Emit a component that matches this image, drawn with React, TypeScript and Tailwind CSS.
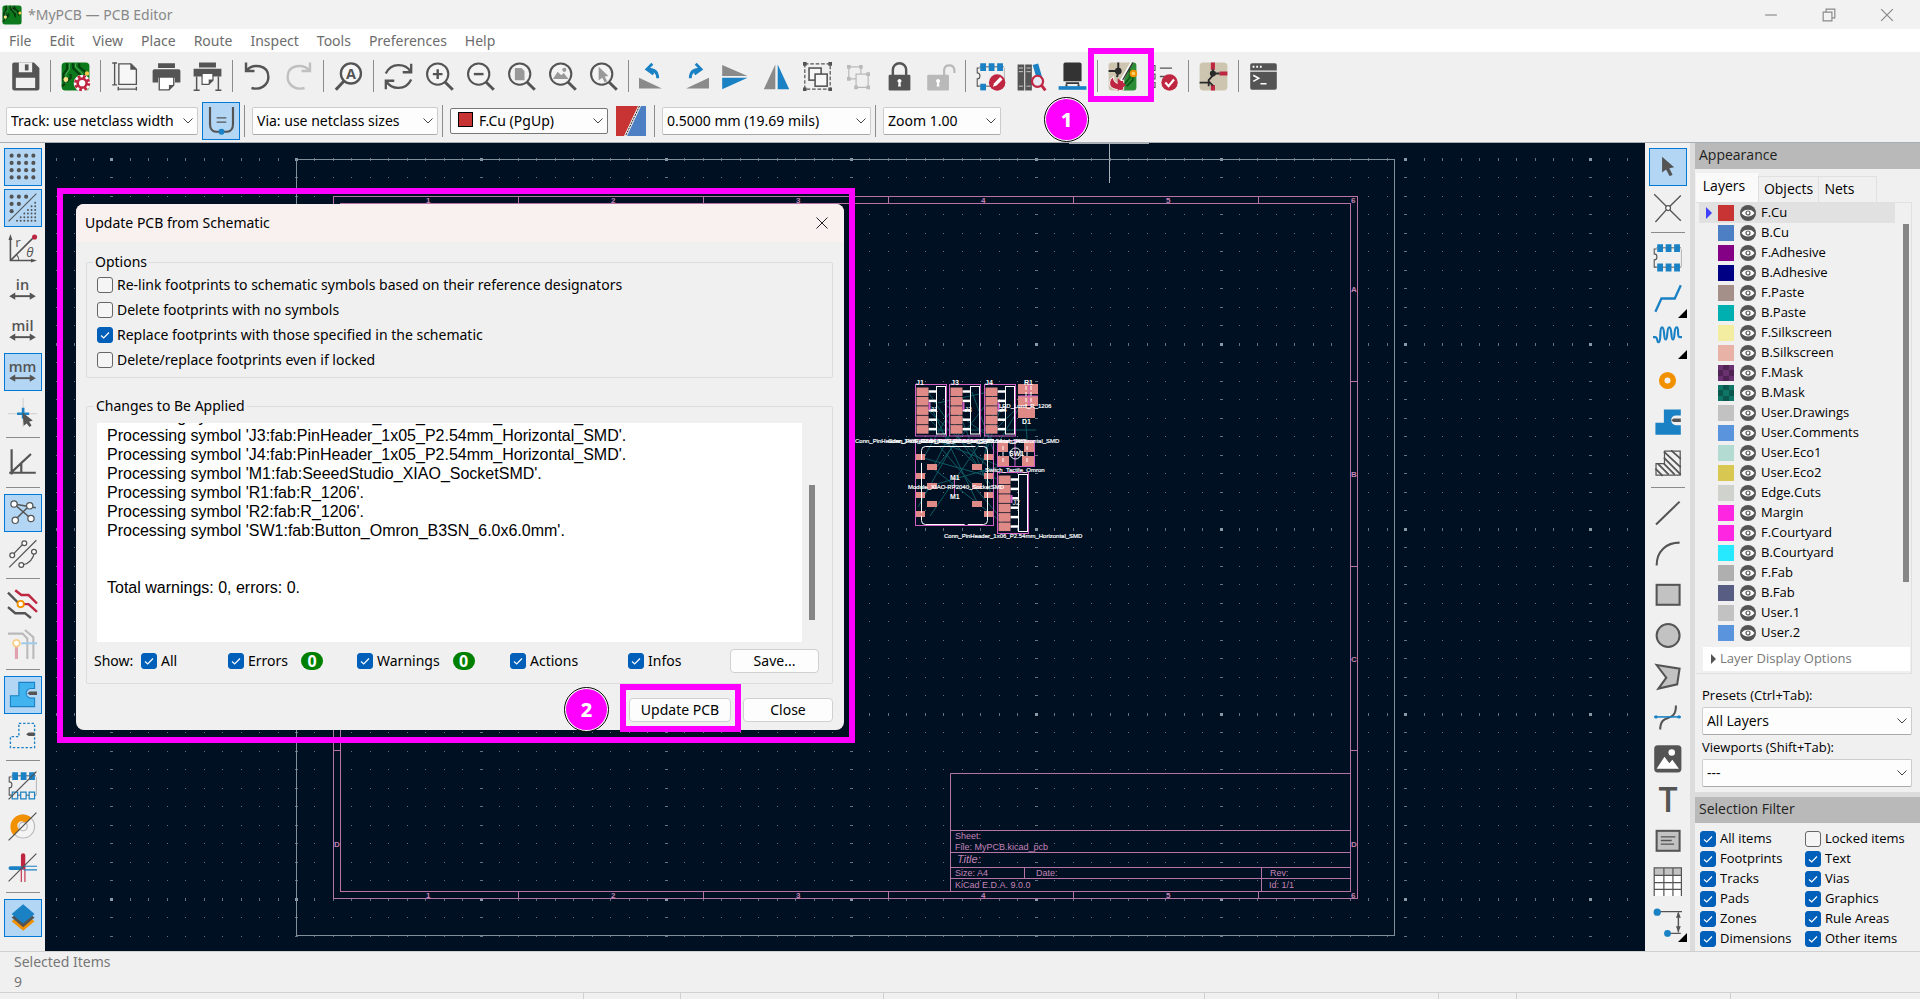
import React, { useState } from "react";

const D = "#545454";
const B = "#1a81c4";
const R = "#bf2641";
const G = "#b9b9b9";

const Icon = ({ children }: { children: React.ReactNode }) => (
  <svg viewBox="0 0 24 24" className="size-[29px] shrink-0 overflow-visible" fill="none" aria-hidden="true">
    {children}
  </svg>
);

const Lens = () => (
  <>
    <circle cx="10.500" cy="10" r="8.800" stroke={D} strokeWidth="1.700" fill="#f4f4f4" />
    <path d="M16.500 16.500l6.500 6.500" stroke={D} strokeWidth="2.400" />
  </>
);

const Board = () => (
  <>
    <rect x="0.5" y="0.5" width="23" height="23" rx="3" fill="#0c7a1c" />
    <path d="M5 1v5l-3 4v6M10 1v4l6 6v4M15 1v3l5 4v5M1 20l7-7v-3" stroke="#06420f" strokeWidth="1.8" />
    <path d="M7 1v5l-3 4v8M12 1v3l6 6" stroke="#4aa84f" strokeWidth="0.9" />
    <circle cx="21.5" cy="9.500" r="1.8" fill="#f5c84a" />
    <circle cx="4" cy="14.5" r="2" fill="#ffe08a" />
  </>
);

const Chip = () => (
  <>
    <path d="M3 5H1v4c3 0 3 5 0 5v6h2" stroke={D} strokeWidth="0.9" />
    <path d="M23.500 5v15" stroke="#aaa" strokeWidth="0.7" />
    <path d="M3 4h20M3 20h20" stroke={D} strokeWidth="0.8" />
    <path d="M3.500 1h4.800v6.500H3.500zM10.500 1h4.800v6.500h-4.800zM17.500 1h4.800v6.500h-4.800z" fill={B} />
  </>
);

const Arrows = ({ text }: { text: string }) => (
  <>
    <text x="12" y="12" textAnchor="middle" fontSize="12" fontFamily="Open Sans, sans-serif" fontWeight="600" fill={D}>{text}</text>
    <path d="M4 17.500h16" stroke={D} strokeWidth="1.6" />
    <path d="M1 17.500l5-3v6zM23 17.500l-5-3v6z" fill={D} />
  </>
);

const Schem = () => (
  <>
    <rect x="0.5" y="0.500" width="23" height="23" rx="3" fill="#cdc5b0" />
    <path d="M11.500 0.500v6M17 9.500h6.500M11.500 19v4.500" stroke={R} strokeWidth="3.400" />
    <path d="M11.500 6v5l-3.500 4v5M0.500 17h8M8 16l3.500 3.500M12 9.500h5" stroke="#2a2a2a" strokeWidth="1.500" />
    <circle cx="11.500" cy="9.500" r="2.500" fill="#2a2a2a" />
  </>
);

const icons: Record<string, React.ReactNode> = {
  save: (
    <>
      <path d="M1 2a1.500 1.500 0 0 1 1.500-1.500H19L23.500 5v17a1.500 1.500 0 0 1-1.500 1.500H2.500A1.500 1.500 0 0 1 1 22z" fill={D} />
      <path d="M6.500 0.500h11v8h-11zM4 13h16v8.500H4z" fill="#efefef" />
      <path d="M11.500 2h3v5h-3z" fill={D} />
    </>
  ),
  board: (
    <>
      <Board />
      <circle cx="17.500" cy="17.500" r="4" stroke="#fff" strokeWidth="6" />
      <circle cx="17.500" cy="17.500" r="5.400" stroke={R} strokeWidth="2.600" strokeDasharray="2.200 2.040" />
      <circle cx="17.500" cy="17.500" r="3.700" stroke={R} strokeWidth="2.200" fill="#fff" />
    </>
  ),
  page: (
    <>
      <path d="M6.500 1.500h10l4.500 4.500v12.500H6.500z" stroke={D} strokeWidth="1.100" fill="#f7f7f7" />
      <path d="M16 1v5.500h5.500z" fill={D} />
      <path d="M1 0.800h4M3 1v18M1 19h4M6 20.500v3M21 20.500v3M6 22.500h15" stroke={D} strokeWidth="1.100" />
    </>
  ),
  print: (
    <>
      <path d="M5 1h14v4H5zM2 6h20a1.500 1.500 0 0 1 1.500 1.500V17H19v-4H5v4H0.500V7.500A1.500 1.500 0 0 1 2 6z" fill={D} />
      <path d="M6 12.500h12V19l-4 4H6z" fill="#fff" stroke={D} strokeWidth="1.100" />
      <path d="M14 23.500V19h4.500z" fill={D} />
    </>
  ),
  plot: (
    <>
      <path d="M5 0.500h14v4H5zM0.500 5.500h23v6.500H0.500z" fill={D} />
      <path d="M3 12v11M21 12v11M0.500 23.300h5M18.500 23.300h5" stroke={D} strokeWidth="1.200" />
      <path d="M7.500 9.500h9v5.500l-3.500 3.500H7.500z" fill="#fff" stroke={D} />
      <path d="M13 19v-4.500h4z" fill={D} />
    </>
  ),
  undo: <path d="M2.500 0.500v7h7M3 7C8 1 21 2 21 12.500c0 7-7 11-14 9" stroke={D} strokeWidth="2" />,
  redo: <path d="M21.500 0.500v7h-7M21 7C16 1 3 2 3 12.500c0 7 7 11 14 9" stroke="#c0c0c0" strokeWidth="2" />,
  find: (
    <>
      <circle cx="14" cy="9.500" r="8.300" stroke={D} strokeWidth="1.900" fill="#f7f7f7" />
      <path d="M8.500 15.500L1.500 23" stroke={D} strokeWidth="2.500" />
      <text x="14" y="14" textAnchor="middle" fontSize="12" fontWeight="700" fontFamily="Open Sans, sans-serif" fill={D}>A</text>
    </>
  ),
  refresh: <path d="M22.500 1.500v7h-7M22 8C18 1 6 0 1.500 9.500M1.500 22.500v-7h7M2 16c4 7 16 8 20.500-1.500" stroke={D} strokeWidth="1.900" />,
  zoomIn: <><Lens /><path d="M6.500 10h8M10.500 6v8" stroke={D} strokeWidth="2" /></>,
  zoomOut: <><Lens /><path d="M6.500 10h8" stroke={D} strokeWidth="2" /></>,
  zoomFit: <><Lens /><path d="M6.500 5H12l2.500 2.500V15h-8z" fill="#999" /></>,
  zoomObj: <><Lens /><path d="M4 14l4-6 3 3 2-2 4 5z" fill="#999" /><circle cx="13.500" cy="6.500" r="1.700" fill="#999" /></>,
  zoomSel: <><Lens /><path d="M8 4v11l3-2 2 4 2-1-2-4 3-.500z" fill="#999" /></>,
  ccw: <><path d="M0 22v-9l19 9z" fill="#8a8a8a" /><path d="M15.500 13.500c0-5-3-7.500-8-7.500M11 1.500L6.500 6l5.500 4" stroke={B} strokeWidth="2.300" /></>,
  cw: <><path d="M24 22v-9L5 22z" fill="#8a8a8a" /><path d="M8.500 13.500c0-5 3-7.500 8-7.500M13 1.500L17.500 6 12 10" stroke={B} strokeWidth="2.300" /></>,
  flipV: <><path d="M1 2.500v9h21z" fill="#8a8a8a" /><path d="M1 22.500v-9.500h21z" fill={B} /></>,
  flipH: <><path d="M1.500 22.500h9.500V2z" fill="#8a8a8a" /><path d="M22.500 22.500H13V2z" fill={B} /></>,
  group: (
    <>
      <rect x="1.500" y="1.500" width="21" height="21" stroke={D} strokeDasharray="3 1.500" />
      <path d="M0 0h3v3H0zM21 0h3v3h-3zM0 21h3v3H0zM21 21h3v3h-3z" fill={D} />
      <rect x="5" y="5" width="10" height="10" fill="#f7f7f7" stroke={D} strokeWidth="1.300" />
      <rect x="10" y="10" width="10" height="10" fill="#f7f7f7" stroke={D} strokeWidth="1.300" />
    </>
  ),
  ungroup: (
    <>
      <path d="M4 4h10v10H4z" stroke={G} />
      <path d="M10 10h10v11H10z" fill="#f0f0f0" stroke={G} />
      <path d="M2.500 2.500h3v3h-3zM12.500 2.500h3v3h-3zM2.500 12.500h3v3h-3zM18.500 8.500h3v3h-3zM8.500 19.500h3v3h-3zM18.500 19.500h3v3h-3z" fill={G} />
    </>
  ),
  lock: (
    <>
      <path d="M6.500 11V6.500a5.500 5.500 0 0 1 11 0V11" stroke={D} strokeWidth="2" />
      <rect x="3" y="10.500" width="18" height="13" rx="1" fill={D} />
      <path d="M12 14a1.700 1.700 0 0 1 .8 3.200l.4 3h-2.400l.4-3A1.700 1.700 0 0 1 12 14z" fill="#fff" />
    </>
  ),
  unlock: (
    <>
      <path d="M15 11V6.500a4.300 4.300 0 0 1 8.500 0V9" stroke={G} strokeWidth="1.800" />
      <rect x="1" y="10.500" width="18" height="13" rx="1" fill={G} />
      <path d="M10 14a1.700 1.700 0 0 1 .8 3.200l.4 3H8.800l.4-3A1.700 1.700 0 0 1 10 14z" fill="#fff" />
    </>
  ),
  fpEdit: (
    <>
      <Chip />
      <path d="M3.500 18h4.800v5.500H3.500z" fill={B} />
      <circle cx="17.500" cy="17" r="6.800" fill={R} />
      <path d="M14 20.500l1-3 5-5 2 2-5 5z" fill="#fff" />
    </>
  ),
  library: (
    <>
      <path d="M0.500 2h5.500v21.500H0.500zM6.800 2h5.500v21.500H6.800z" fill={D} />
      <path d="M1.500 5h3.500M1.500 8h3.500M7.800 5h3.500M7.800 8h3.500M1.500 20h3.500M7.800 20h3.500" stroke="#ccc" strokeWidth="0.800" />
      <path d="M13 2.500l4.500-1.300 3.500 12-4.500 1.300z" fill={B} />
      <circle cx="17" cy="16" r="4.600" fill="#e9e9f2" stroke={R} strokeWidth="1.800" />
      <path d="M20 19l3.500 4.500" stroke={R} strokeWidth="2.400" />
    </>
  ),
  viewer: (
    <>
      <path d="M6 0.500h12a1.500 1.500 0 0 1 1.500 1.500v14h-15V2A1.500 1.500 0 0 1 6 0.500z" fill="#333" />
      <path d="M6.500 17.500h11M7 18.500v2M17 18.500v2" stroke="#333" strokeWidth="1.600" />
      <path d="M0.500 20h23v3H0.500z" fill={B} />
    </>
  ),
  update: (
    <>
      <path d="M3 0.500h17L8 23.500H3A2.500 2.500 0 0 1 .5 21V3A2.500 2.500 0 0 1 3 .5z" fill="#cdc5b0" />
      <path d="M20 .5h1A2.500 2.500 0 0 1 23.500 3v18a2.500 2.500 0 0 1-2.500 2.500H9z" fill="#2e8b36" />
      <path d="M18 6v7l-5 6M20.500 12v3l-5 5" stroke="#0b5a17" strokeWidth="1.500" />
      <path d="M8.500 0.500v7l-1 5M0.500 7.500h8" stroke="#2a2a2a" strokeWidth="1.600" />
      <circle cx="8.500" cy="7.500" r="2.800" fill="#2a2a2a" />
      <path d="M19.500 0.500L10 17" stroke="#fff" strokeWidth="2" />
      <path d="M20.500 0.500L11 17" stroke="#333" strokeWidth="1.100" />
      <circle cx="21" cy="9.500" r="2.300" fill="#ffd56b" stroke="#f29100" strokeWidth="1.600" />
      <path d="M4.500 12c-4 3-4.500 8 0 10 2 .8 4 .9 5 .8l-.5 1.200 4-1v-8l-3 .500-.5 2.500c-4-.500-5-2.500-5-6z" fill={R} stroke="#fff" strokeWidth="0.800" />
      <path d="M8 13.500l7 5.500-7 5z" fill={R} />
    </>
  ),
  drc: (
    <>
      <path d="M2 3h3v4H2zM2 10h3v4H2zM2 17h3v4H2z" stroke={D} strokeWidth="0.900" />
      <path d="M9 5h10M9 12h5" stroke={D} strokeWidth="1.100" />
      <circle cx="17" cy="17" r="6.800" fill={R} />
      <path d="M13.500 17l2.700 3 4.500-5.500" stroke="#fff" strokeWidth="1.800" />
    </>
  ),
  schem: <Schem />,
  script: (
    <>
      <path d="M2.500 1h19A1.500 1.500 0 0 1 23 2.500V7H1V2.500A1.500 1.500 0 0 1 2.500 1zM1 8h22v13.500a1.500 1.500 0 0 1-1.500 1.500h-19A1.500 1.500 0 0 1 1 21.500z" fill={D} />
      <path d="M3 4h1.500M6 4h1.500M9 4h1.500" stroke="#fff" strokeWidth="1.600" />
      <path d="M3.500 11l4.500 2.500-4.500 2.500M9.500 18h5" stroke="#fff" strokeWidth="1.300" />
    </>
  ),
  grid: (
    <g fill={D}>
      {[3, 9, 15, 21].map((y) => [3, 9, 15, 21].map((x) => <circle key={x + "-" + y} cx={x} cy={y} r="1.700" />))}
    </g>
  ),
  gridOver: (
    <>
      <g fill={D}>
        {[[3, 3], [9, 3], [15, 3], [3, 9], [9, 9], [3, 15]].map(([x, y]) => <circle key={x + "-" + y} cx={x} cy={y} r="1.700" />)}
        {[0, 1, 2, 3, 4, 5].map((r) => Array.from({ length: r + 1 }, (_, c) => <circle key={r + "." + c} cx={22.500 - c * 3} cy={8 + r * 3} r="0.800" />))}
      </g>
      <path d="M0.500 23.500l23-23" stroke={D} strokeWidth="0.900" />
    </>
  ),
  polar: (
    <>
      <path d="M2 3v19h19M2 22L21 3" stroke={D} strokeWidth="1.300" />
      <path d="M2 0l-1.600 5h3.200zM24 22l-5-1.600v3.200z" fill={D} />
      <path d="M9 22a7 7 0 0 0-2-5" stroke={D} strokeWidth="0.900" />
      <circle cx="22" cy="2.500" r="2.100" fill={R} />
      <text x="6" y="11" fontSize="11" fill={D} fontFamily="Open Sans, sans-serif">r</text>
      <text x="15" y="19" fontSize="11" fontStyle="italic" fill={D} fontFamily="Open Sans, sans-serif">θ</text>
    </>
  ),
  inch: <Arrows text="in" />,
  mil: <Arrows text="mil" />,
  mm: <Arrows text="mm" />,
  cursor: (
    <>
      <path d="M12.500 0v24M0 13h24" stroke="#c2c2c2" strokeWidth="0.600" />
      <path d="M12.500 8v9M7.500 13h10" stroke={B} strokeWidth="2.200" />
      <path d="M12 12l1 11 2.500-2 2.200 3 1.800-1.300-2-3 3-1z" fill={D} />
    </>
  ),
  angle: <path d="M3 1v21M1 20.500h22M3 20L19 5M11 20v-7" stroke={D} strokeWidth="1.800" />,
  rats: (
    <>
      <path d="M5 5l18 3M5 5l14 12M18 6L6 18" stroke={D} strokeWidth="1.200" />
      <g fill="#fff" stroke={D}>
        <circle cx="5" cy="5" r="2.600" /><circle cx="18" cy="6.500" r="2.600" />
        <circle cx="6" cy="18.500" r="2.600" /><circle cx="19" cy="17" r="2.600" />
      </g>
    </>
  ),
  curved: (
    <>
      <path d="M1 23.500L23.500 1M4 13L13 3.500M12 21.500c6-1 9-5 10-11" stroke={D} />
      <g fill="#fff" stroke={D}>
        <circle cx="3.500" cy="13.500" r="2" /><circle cx="13.500" cy="3.500" r="2" />
        <circle cx="11" cy="21.500" r="2" /><circle cx="21.500" cy="10.500" r="2" />
      </g>
    </>
  ),
  net: (
    <>
      <path d="M0 3l9 9M0 15l6 5h8l5 4" stroke={D} strokeWidth="2" />
      <path d="M6 1l5 4h6l7 7M12 12.500h5l7 6.500" stroke={R} strokeWidth="2" />
      <circle cx="10.500" cy="12.500" r="2.600" stroke="#f29100" strokeWidth="1.500" fill="#fff" />
    </>
  ),
  dim: (
    <>
      <path d="M0 3h12l4 4v17M14 0l7 6v18" stroke={G} strokeWidth="1.700" />
      <path d="M7 14v10" stroke="#e0a0ae" strokeWidth="2.600" />
      <path d="M11 11h13" stroke="#9fcbe8" strokeWidth="1.700" />
      <circle cx="7" cy="11" r="2.800" stroke="#f8cf8a" strokeWidth="1.500" fill="#fff" />
    </>
  ),
  zoneFill: (
    <>
      <path d="M9 2h13v5h-3a4 4 0 1 0 0 8h3v7H2V13h7z" fill="#41b4f0" stroke={B} strokeWidth="0.900" />
      <path d="M16 11l2-1.500h6v3h-6z" fill={D} />
    </>
  ),
  zoneOut: (
    <>
      <path d="M9 2h13v20H2V13h7z" stroke={B} strokeWidth="1.100" strokeDasharray="2 1.500" />
      <path d="M15 11l2-1.500h5v3h-5z" fill={D} />
    </>
  ),
  padSketch: (
    <>
      <Chip />
      <path d="M3.500 17.500h4.500V23H3.500zM10.500 17.500h4.500V23h-4.500zM17.500 17.500h4.500V23h-4.500z" stroke={B} fill="#f0f0f0" />
      <path d="M0.500 23.500l23-23" stroke={D} strokeWidth="1.100" />
    </>
  ),
  viaSketch: (
    <>
      <circle cx="12.500" cy="12" r="9.500" stroke="#bbb" fill="#f4f4f4" />
      <path d="M5 19.500A10 10 0 1 1 19.500 5l-5 5a3.500 3.500 0 1 0-4.500 4.500z" fill="#f29100" />
      <circle cx="12.500" cy="12" r="3.500" stroke="#bbb" />
      <path d="M0.500 23.500l23-23" stroke={D} strokeWidth="1.100" />
    </>
  ),
  trackSketch: (
    <>
      <path d="M12.500 2v10" stroke={R} strokeWidth="3.600" strokeLinecap="round" />
      <path d="M2 12.500h9" stroke={B} strokeWidth="3.200" strokeLinecap="round" />
      <path d="M11 12v12M14 12v12" stroke={R} strokeWidth="0.900" />
      <path d="M13 11h11M13 14h11" stroke={B} strokeWidth="0.900" />
      <path d="M0.500 23.500l23-23" stroke={D} />
    </>
  ),
  layers: (
    <>
      <path d="M12.500 8l9.500 7-9.500 8L3 15z" fill="#f29100" />
      <path d="M12.500 5l9.500 7-9.500 8L3 12z" fill={D} />
      <path d="M12.500 1l9.500 8-9.500 8L3 9z" fill={B} />
    </>
  ),
  select: <path d="M7.500 4v13l3.300-2.500 3 5.500 2.400-1.100-2.700-5.400 4-.800z" fill={D} />,
  highlight: (
    <>
      <path d="M1 1l10 10M14 14l9 9M23 2l-9 9M11 14L2 24" stroke={D} strokeWidth="1.100" />
      <circle cx="12.500" cy="12.500" r="2" stroke={D} fill="#fff" />
    </>
  ),
  footprint: (
    <>
      <Chip />
      <path d="M3.500 17h4.800v6.500H3.500zM10.500 17h4.800v6.500h-4.800zM17.500 17h4.800v6.500h-4.800z" fill={B} />
    </>
  ),
  route: <path d="M2 23l5-11h11l5-11" stroke={B} strokeWidth="1.900" />,
  tune: <path d="M0 10h2c2 0 1 5 3 4s0-12 2.500-12 1 10 3 10 .500-10 3-10 1 10 3 10 .500-10 3-10 0 8 2.500 8h2" stroke={B} strokeWidth="1.800" />,
  via: <circle cx="12" cy="12" r="4.800" stroke="#f29100" strokeWidth="4.600" />,
  zone: (
    <>
      <path d="M9 2h14v5h-4a4 4 0 1 0 0 8h4v8H2V13h7z" fill={B} />
      <path d="M15 11l2-1.500h6v3h-6z" fill={D} />
    </>
  ),
  rule: (
    <>
      <path d="M9.500 2.500h13v20h-20V13h7z" stroke={D} />
      <path d="M9 3l14 13M9 8l14 14M9 13l9 9M4 13l9 9M2 17l6 6M15 2l8 7" stroke={D} strokeWidth="1.500" />
    </>
  ),
  line: <path d="M2.500 22L22 3" stroke={D} strokeWidth="1.700" />,
  arc: <path d="M3 22C3 10 11 3 22 3" stroke={D} strokeWidth="1.700" />,
  rect: <rect x="3" y="4" width="19" height="16.500" fill="#c2c2c2" stroke={D} strokeWidth="1.700" />,
  circle: <circle cx="12.500" cy="12" r="9.500" fill="#c2c2c2" stroke={D} strokeWidth="1.700" />,
  poly: <path d="M3 2.500l19 3-2 13L4.500 22 11 13z" fill="#c2c2c2" stroke={D} strokeWidth="1.700" />,
  bezier: (
    <>
      <path d="M6 22c0-15 13-4 13-20" stroke={D} strokeWidth="1.700" />
      <path d="M1 11.500h22" stroke={B} strokeWidth="1.300" />
      <circle cx="2.500" cy="11.500" r="1.400" fill={B} /><circle cx="21.500" cy="11.500" r="1.400" fill={B} />
    </>
  ),
  image: (
    <>
      <rect x="1" y="1" width="22.500" height="22.500" rx="3" fill={D} />
      <circle cx="15.500" cy="7" r="2.700" fill="#fff" />
      <path d="M3 20.500l6.500-10 4 5.500 2.500-3 5.500 7.500z" fill="#fff" />
    </>
  ),
  text: <text x="12.500" y="22" textAnchor="middle" fontSize="28" fontWeight="600" fontFamily="Open Sans, sans-serif" fill={D}>T</text>,
  textBox: (
    <>
      <rect x="3" y="4" width="19" height="16.500" fill="#c2c2c2" stroke={D} strokeWidth="1.700" />
      <path d="M6.500 9h12M6.500 12h9M6.500 15h11" stroke={D} strokeWidth="1.200" />
    </>
  ),
  table: (
    <>
      <path d="M1 1h23v6H1z" fill="#c2c2c2" />
      <path d="M1 7h23v17H1z" fill="#fff" />
      <path d="M0.500 0.800h23.500M0.500 7h23.500M0.500 13h23.500M0.500 18.500h23.500M1 0.500V24M9 0.500V24M16.500 0.500V24M23.500 0.500V24" stroke={D} />
    </>
  ),
  dimension: (
    <>
      <path d="M3 3h21M11 21h12M21 4v16" stroke={D} strokeWidth="1.200" />
      <path d="M21 3l-2 5h4zM21 20l-2-5h4z" fill={D} />
      <circle cx="3.500" cy="3.500" r="3" fill={B} /><circle cx="12" cy="21" r="2.800" fill={B} />
    </>
  ),
};

const topTools = [
  "save", "|", "board", "|", "page", "print", "plot", "|", "undo", "redo", "|", "find", "|",
  "refresh", "zoomIn", "zoomOut", "zoomFit", "zoomObj", "zoomSel", "|",
  "ccw", "cw", "flipV", "flipH", "group", "ungroup", "lock", "unlock", "|",
  "fpEdit", "library", "viewer", "|", "update", "drc", "|", "schem", "|", "script",
];
const leftTools = [
  "grid", "gridOver", "polar", "inch", "mil", "mm", "cursor", "|", "angle", "|", "rats", "curved", "|",
  "net", "dim", "|", "zoneFill", "zoneOut", "|", "padSketch", "viaSketch", "trackSketch", "|", "layers",
];
const rightTools = [
  "select", "highlight", "|", "footprint", "route", "tune", "via", "zone", "rule", "|", "line", "arc",
  "rect", "circle", "poly", "bezier", "image", "text", "textBox", "table", "dimension",
];
const active = ["grid", "gridOver", "mm", "rats", "zoneFill", "layers", "select"];
const flyout = ["route", "tune", "dimension"];

const layers: [string, string][] = [
  ["F.Cu", "#c83434"], ["B.Cu", "#4d7fc4"], ["F.Adhesive", "#840084"], ["B.Adhesive", "#000084"],
  ["F.Paste", "#a49089"], ["B.Paste", "#00b0b0"], ["F.Silkscreen", "#f2eda1"], ["B.Silkscreen", "#e8b2a7"],
  ["F.Mask", "#6a3170"], ["B.Mask", "#0e7567"], ["User.Drawings", "#c2c2c2"], ["User.Comments", "#5994dc"],
  ["User.Eco1", "#b4dbd2"], ["User.Eco2", "#d8c852"], ["Edge.Cuts", "#d0d2cd"], ["Margin", "#ff26e2"],
  ["F.Courtyard", "#ff26e2"], ["B.Courtyard", "#26e9ff"], ["F.Fab", "#afafaf"], ["B.Fab", "#585d84"],
  ["User.1", "#c2c2c2"], ["User.2", "#5994dc"],
];

const filters: [string, boolean][] = [
  ["All items", true], ["Locked items", false], ["Footprints", true], ["Text", true],
  ["Tracks", true], ["Vias", true], ["Pads", true], ["Graphics", true],
  ["Zones", true], ["Rule Areas", true], ["Dimensions", true], ["Other items", true],
];

const report = [
  "Processing symbol 'J2:fab:PinHeader_1x06_P2.54mm_Horizontal_SMD'.",
  "Processing symbol 'J3:fab:PinHeader_1x05_P2.54mm_Horizontal_SMD'.",
  "Processing symbol 'J4:fab:PinHeader_1x05_P2.54mm_Horizontal_SMD'.",
  "Processing symbol 'M1:fab:SeeedStudio_XIAO_SocketSMD'.",
  "Processing symbol 'R1:fab:R_1206'.",
  "Processing symbol 'R2:fab:R_1206'.",
  "Processing symbol 'SW1:fab:Button_Omron_B3SN_6.0x6.0mm'.",
];

function Check({ label, on, small }: { label: string; on?: boolean; small?: boolean }) {
  const [checked, setChecked] = useState(!!on);
  return (
    <label className={"flex items-center gap-1 whitespace-nowrap " + (small ? "text-[13px]" : "text-sm")}>
      <span className="relative flex size-4">
        <input
          type="checkbox"
          checked={checked}
          onChange={() => setChecked(!checked)}
          className="size-4 appearance-none rounded-[3px] border border-[#666] bg-[#f5f5f5] checked:border-[#005fb8] checked:bg-[#005fb8]"
        />
        {checked && (
          <svg viewBox="0 0 16 16" className="pointer-events-none absolute inset-0" fill="none">
            <path d="M4 8.500l2.700 2.500L12 5.500" stroke="#fff" strokeWidth="1.200" />
          </svg>
        )}
      </span>
      {label}
    </label>
  );
}

function Combo({ value, label, className, swatch }: { value: string; label: string; className: string; swatch?: boolean }) {
  return (
    <div className={"relative shrink-0 " + className}>
      <select
        aria-label={label}
        className={"h-full w-full appearance-none rounded-[2px] border bg-[#fdfdfd] pr-6 text-sm text-black " + (swatch ? "border-[#777] pl-7" : "border-[#ccc] border-b-[#aaa] pl-1")}
      >
        <option>{value}</option>
      </select>
      {swatch && <span className="absolute top-1 left-2 size-[15px] border border-black bg-[#c83434]" />}
      <svg viewBox="0 0 10 6" className="pointer-events-none absolute top-1/2 right-[5px] h-[6px] w-[10px] -translate-y-1/2" fill="none">
        <path d="M0.500 0.500L5 5l4.500-4.500" stroke="#444" />
      </svg>
    </div>
  );
}

const Step = ({ n, className }: { n: number; className: string }) => (
  <span className={"absolute z-20 flex size-[45px] items-center justify-center rounded-full border border-black bg-white p-px " + className}>
    <span className="flex size-full items-center justify-center rounded-full bg-[#ff00ff] text-xl font-extrabold text-white">{n}</span>
  </span>
);

function SideTools({ items }: { items: string[] }) {
  return (
    <div className="flex w-[45px] shrink-0 flex-col items-center bg-[#f0f0f0] pt-[3px]">
      {items.map((t, i) =>
        t === "|" ? (
          <div key={i} className="my-1 h-px w-[34px] bg-[#8c8c8c]" />
        ) : (
          <div key={t} className="flex h-[41px] items-center">
            <button
              aria-label={t}
              className={"relative flex size-[38px] items-center justify-center " + (active.includes(t) ? "border border-[#0078d4] bg-[#b3d6f5]" : "")}
            >
              <Icon>{icons[t]}</Icon>
              {flyout.includes(t) && (
                <svg viewBox="0 0 9 9" className="absolute right-0 bottom-0 size-[9px]"><path d="M9 0v9H0z" /></svg>
              )}
            </button>
          </div>
        ),
      )}
    </div>
  );
}

// grid dots every 5 mm, heavier ones every 50 mm
const STEP = 18.49;
let dots = "";
let major = "";
for (let i = -14; i < 74; i++) {
  for (let j = 0; j < 43; j++) {
    const x = Math.floor(296.5 + i * STEP);
    const y = Math.round(159 + j * STEP);
    const mx = i % 10 === 0;
    const my = j % 10 === 0;
    if (mx && my) major += `M${x - 1} ${y - 1}h3v3h-3z`;
    else if (mx) dots += `M${x - 1} ${y}h3v1h-3z`;
    else if (my) dots += `M${x} ${y - 1}h1v3h-1z`;
    else dots += `M${x} ${y}h1v1h-1z`;
  }
}

function Header({ x, y, pins, name }: { x: number; y: number; pins: number; name: string }) {
  const h = pins * 9.5;
  return (
    <g>
      <rect x={x} y={y} width="31" height={h + 4} stroke="#d25fc4" />
      <rect x={x + 21} y={y + 2} width="9" height={h} stroke="#fff" />
      {Array.from({ length: pins }, (_, i) => (
        <g key={i}>
          <path d={`M${x + 13} ${y + 7 + i * 9.4}h8`} stroke="#fff" strokeWidth="2.500" />
          <rect x={x + 1} y={y + 3 + i * 9.4} width="12" height="8.600" fill="#e08a88" />
        </g>
      ))}
      <path d={`M${x + 14} ${y + h / 2 - 6}v8`} stroke="#d25fc4" strokeWidth="2" />
      <text x={x + 15} y={y + h / 2 + 4} fontSize="7" fill="#fff">{name}</text>
    </g>
  );
}

function BoardView() {
  const cols = [1, 2, 3, 4, 5];
  return (
    <svg
      viewBox="45 143 1600 808"
      preserveAspectRatio="xMinYMin slice"
      className="absolute inset-0 h-full w-full"
      fill="none"
      fontFamily="Liberation Sans, sans-serif"
    >
      <path d={dots} fill="#66727f" shapeRendering="crispEdges" />
      <path d={major} fill="#8b98a5" shapeRendering="crispEdges" />
      <path d="M1109.500 143v40M1069 143.500h80" stroke="#a9b0b8" />
      <rect x="296.500" y="159.500" width="1098" height="776" stroke="#83909c" />
      <g stroke="#b573a6">
        <rect x="333.500" y="196.500" width="1024" height="702" />
        <rect x="340.500" y="203.500" width="1010" height="688" />
        {cols.map((n) => {
          const x = Math.round(333.5 + n * 184.9) + 0.5;
          return <path key={n} d={`M${x} 196v8M${x} 891v8`} />;
        })}
        {[381, 566, 750].map((y) => <path key={y} d={`M333 ${y + 0.5}h8M1350 ${y + 0.5}h8`} />)}
        <path d="M950.500 891V773.500H1350M950 830.500h400M950 852.500h400M950 867.500h400M950 878.500h400M1024.500 867v11M1261.500 867v24" />
      </g>
      <g fill="#c583b6" fontSize="8" fontWeight="700">
        {cols.map((n) => (
          <React.Fragment key={n}>
            <text x={241 + n * 185} y="203">{n}</text>
            <text x={241 + n * 185} y="898">{n}</text>
          </React.Fragment>
        ))}
        <text x="1351" y="203">6</text>
        <text x="1351" y="898">6</text>
        <text x="334" y="847">D</text>
        {["A", "B", "C", "D"].map((c, i) => (
          <text key={c} x="1351" y={292 + i * 185}>{c}</text>
        ))}
      </g>
      <g fill="#c583b6" fontSize="9">
        <text x="955" y="839">Sheet:</text>
        <text x="955" y="850">File: MyPCB.kicad_pcb</text>
        <text x="957" y="863" fontSize="11" fontStyle="italic">Title:</text>
        <text x="955" y="876">Size: A4</text>
        <text x="1036" y="876">Date:</text>
        <text x="1270" y="876">Rev:</text>
        <text x="955" y="888">KiCad E.D.A. 9.0.0</text>
        <text x="1269" y="888">Id: 1/1</text>
      </g>

      <path
        d="M928 392l62 92M928 401l50 103M962 391l-38 66M930 420l62 60M938 403l55-12M962 410l-30 60M996 392l-60 76M996 401l-12 56M996 420l-66 96M928 410l66 62M962 420l30 76M962 429l-44 78M1000 466l-70-28M940 447l60 70M1025 412l3 40M996 429l30-30M920 457l78 22M930 486l70-20M1000 440l18-30M926 430h110M944 404l55 40M972 392l22 60M930 466l74 58M980 470l20-60"
        stroke="#0d5a62"
      />
      <Header x={915.5} y={384.5} pins={5} name="J1" />
      <Header x={949.5} y={384.5} pins={5} name="J3" />
      <Header x={984.5} y={384.5} pins={5} name="J4" />
      <Header x={997.5} y={472.5} pins={6} name="J2" />
      <g fill="#e08a88">
        <rect x="1018" y="384" width="20" height="10" /><rect x="1018" y="396" width="20" height="10" />
        <rect x="1018" y="407" width="17" height="11" />
        <rect x="997" y="441" width="11" height="11" /><rect x="1024" y="441" width="11" height="11" />
        <rect x="997" y="456" width="12" height="10" /><rect x="1022" y="456" width="13" height="10" />
        {[457, 476, 495, 514].map((y) => (
          <React.Fragment key={y}>
            <rect x="916" y={y - 3} width="9" height="6" /><rect x="984" y={y - 3} width="10" height="6" />
          </React.Fragment>
        ))}
        {[467, 486, 504].map((y) => (
          <React.Fragment key={y}>
            <rect x="927" y={y - 3} width="10" height="6" /><rect x="972" y={y - 3} width="10" height="6" />
          </React.Fragment>
        ))}
      </g>
      <g stroke="#d25fc4">
        <rect x="915.500" y="439.500" width="78" height="86" />
        <rect x="997.500" y="440.500" width="37" height="26" />
        <path d="M1029 382v24M1015 440v26M954.500 478v16M1018 396h20" />
      </g>
      <g stroke="#fff">
        <rect x="921.500" y="446.500" width="66" height="78" rx="4" strokeDasharray="50 3" />
        <circle cx="1015.500" cy="453.500" r="5.500" />
        <path d="M1026 386v20M1031 386v18M1003 446v16M1027 446v16" strokeDasharray="4 2" />
      </g>
      <g fill="#fff" fontSize="7" fontWeight="700">
        <text x="916" y="385">J1</text>
        <text x="951" y="385">J3</text>
        <text x="985" y="385">J4</text>
        <text x="1024" y="385">R1</text>
        <text x="1022" y="424">D1</text>
        <text x="1009" y="456">SW1</text>
        <text x="950" y="480">M1</text>
        <text x="950" y="499">M1</text>
      </g>
      <g fill="#fff" stroke="#fff" strokeWidth="0.200" fontSize="6">
        <text x="855" y="443">Conn_PinHeader_1x05_P2.54mm_Horizontal_SMD</text>
        <text x="888" y="443">Conn_PinHeader_1x05_P2.54mm_Horizontal_SMD</text>
        <text x="921" y="443">Conn_PinHeader_1x05_P2.54mm_Horizontal_SMD</text>
        <text x="944" y="538">Conn_PinHeader_1x06_P2.54mm_Horizontal_SMD</text>
        <text x="999" y="408">LED_Lumi_R_1206</text>
        <text x="908" y="489">Module_XIAO-RP2040_SocketSMD</text>
        <text x="985" y="472">Switch_Tactile_Omron</text>
      </g>
    </svg>
  );
}

function UpdateDialog() {
  const btn = "h-6 rounded-[4px] border border-[#d0d0d0] bg-[#fdfdfd] text-sm";
  const badge = "flex h-[18px] w-[22px] items-center justify-center rounded-full bg-[#008000] text-base font-bold text-white";
  return (
    <div className="absolute top-[45px] left-3 w-[798px] border-6 border-[#ff00ff] bg-transparent px-[13px] pt-[10px] pb-[7px]">
      <div role="dialog" aria-labelledby="dlg-title" className="w-[768px] rounded-lg bg-[#f0f0f0] pb-2">
        <div className="flex h-[38px] items-center justify-between rounded-t-lg bg-[#f9f1f0] pr-4 pl-[9px]">
          <h2 id="dlg-title" className="text-sm">Update PCB from Schematic</h2>
          <button aria-label="Close dialog">
            <svg viewBox="0 0 12 12" className="size-3" fill="none"><path d="M0.500 0.500l11 11M11.500 0.500l-11 11" stroke="#222" /></svg>
          </button>
        </div>
        <div className="pt-[10px] pr-[11px] pl-[10px]">
          <fieldset className="rounded-[2px] border border-[#dadcdf] px-[10px] pb-[5px]">
            <legend className="-ml-1 px-0.5 text-sm">Options</legend>
            <div className="grid auto-rows-[25px] items-center justify-start">
              <Check label="Re-link footprints to schematic symbols based on their reference designators" />
              <Check label="Delete footprints with no symbols" />
              <Check label="Replace footprints with those specified in the schematic" on />
              <Check label="Delete/replace footprints even if locked" />
            </div>
          </fieldset>
          <fieldset className="mt-[18px] rounded-[2px] border border-[#dadcdf] px-[7px] pb-[3px]">
            <legend className="px-0.5 text-sm">Changes to Be Applied</legend>
            <div className="flex gap-[7px] px-[3px] pt-[7px]">
              <div role="log" className="h-[219px] w-[705px] overflow-hidden bg-white pl-[10px] font-['Liberation_Sans',sans-serif] text-base leading-[19px]">
                <div className="-mt-4">
                  {report.map((r) => <p key={r}>{r}</p>)}
                  <p className="mt-[38px]">Total warnings: 0, errors: 0.</p>
                </div>
              </div>
              <div className="mt-[62px] h-[135px] w-[6px] bg-[#868686]" />
            </div>
            <div className="grid h-[38px] grid-cols-[47px_87px_129px_153px_118px_102px_89px] items-center text-sm">
              <span>Show:</span>
              <Check label="All" on />
              <div className="flex items-center gap-[13px]">
                <Check label="Errors" on />
                <span className={badge}>0</span>
              </div>
              <div className="flex items-center gap-[13px]">
                <Check label="Warnings" on />
                <span className={badge}>0</span>
              </div>
              <Check label="Actions" on />
              <Check label="Infos" on />
              <button className={btn}>Save...</button>
            </div>
          </fieldset>
          <div className="mt-[14px] flex justify-end gap-3">
            <div className="relative flex">
              <button className={btn + " w-[102px]"}>Update PCB</button>
              <span className="pointer-events-none absolute -top-[14px] -left-[9px] h-12 w-[121px] border-6 border-[#ff00ff]" />
              <Step n={2} className="-top-[11px] -left-[65px]" />
            </div>
            <button className={btn + " w-[90px]"}>Close</button>
          </div>
        </div>
      </div>
    </div>
  );
}

function Appearance() {
  return (
    <aside className="flex w-[225px] shrink-0 flex-col bg-[#f0f0f0] font-['Open_Sans',sans-serif] text-[13px] text-black">
      <h2 className="h-[26px] bg-[#b9b9b9] pl-1 text-sm leading-[24px] text-[#222]">Appearance</h2>
      <div role="tablist" className="mt-[4px] flex items-end pl-px text-sm">
        <button role="tab" aria-selected="true" className="h-[29px] w-[62px] bg-[#fafafa] pr-[6px] pb-[3px]">Layers</button>
        <button role="tab" aria-selected="false" className="h-[26px] w-[61px] border border-b-0 border-[#e0e0e0] pb-px">Objects</button>
        <button role="tab" aria-selected="false" className="h-[26px] w-[58px] border border-l-0 border-b-0 border-[#e0e0e0] pr-4 pb-px">Nets</button>
      </div>
      <div className="mr-2 ml-px border border-l-0 border-[#e0e0e0] pb-[2px]">
        <div className="flex">
          <ul className="ml-[3px] w-[196px]">
            {layers.map(([name, color], i) => (
              <li key={name} className={"flex h-5 items-center pl-[7px] " + (i === 0 ? "bg-[#e1e1e1]" : "")}>
                <span className="w-3">
                  {i === 0 && <svg viewBox="0 0 6 12" className="h-3 w-[6px]"><path d="M0 0l6 6-6 6z" fill="#4040ff" /></svg>}
                </span>
                <span className="relative size-4" style={{ backgroundColor: color }}>
                  {name.endsWith("Mask") && (
                    <svg viewBox="0 0 16 16" className="absolute inset-0 size-4">
                      <path d="M5 0h6v5H5zM0 5h5v6H0zM11 5h5v6h-5zM5 11h6v5H5z" fill="#000" fillOpacity="0.250" />
                    </svg>
                  )}
                </span>
                <button aria-label={"Show " + name} className="ml-[6px]">
                  <svg viewBox="0 0 16 16" className="size-4" fill="none">
                    <circle cx="8" cy="8" r="8" fill={D} />
                    <path d="M1.500 8C4 3.500 12 3.500 14.500 8 12 12.500 4 12.500 1.500 8z" fill="#fff" />
                    <circle cx="8" cy="8" r="2" stroke={D} strokeWidth="1.200" />
                  </svg>
                </button>
                <span className="ml-[5px]">{name}</span>
              </li>
            ))}
          </ul>
          <div className="mt-[21px] ml-2 h-[358px] w-[6px] bg-[#868686]" />
        </div>
        <button className="mt-1 ml-[7px] flex h-6 w-[207px] items-center gap-1 bg-white pl-2 text-[#777]">
          <svg viewBox="0 0 5 10" className="h-[10px] w-[5px]"><path d="M0 0l5 5-5 5z" fill={D} /></svg>
          Layer Display Options
        </button>
      </div>
      <div className="flex flex-col pt-3 pr-2 pl-[7px]">
        <span className="leading-[18px]">Presets (Ctrl+Tab):</span>
        <Combo label="Presets" value="All Layers" className="mt-[3px] h-7 w-full" />
        <span className="mt-[3px] leading-[18px]">Viewports (Shift+Tab):</span>
        <Combo label="Viewports" value="---" className="mt-[3px] h-7 w-full" />
      </div>
      <div className="mt-[5px] h-[5px] bg-[#dcdcdc]" />
      <h2 className="h-[26px] bg-[#b9b9b9] pl-1 text-sm leading-[24px] text-[#222]">Selection Filter</h2>
      <div className="mt-[6px] grid auto-rows-[20px] grid-cols-[105px_1fr] items-center pl-[5px]">
        {filters.map(([name, on]) => <Check key={name} label={name} on={on} small />)}
      </div>
    </aside>
  );
}

export default function App() {
  const sep = "mx-1 w-px shrink-0 bg-[#8c8c8c]";
  return (
    <div className="flex min-h-screen w-full flex-col overflow-hidden bg-[#f0f0f0] font-['Noto_Sans','Open_Sans',sans-serif] text-black">
      <header className="flex h-[29px] items-center bg-[#f2f2f2] pl-[2px] text-sm text-[#888]">
        <svg viewBox="0 0 24 24" className="size-5"><Board /></svg>
        <span className="ml-[6px] flex-1">*MyPCB — PCB Editor</span>
        {["M1 6h10", "M1 3.500h7.500V11H1zM3.500 3V1H11v7.500H9", "M1 1l10 10M11 1L1 11"].map((d, i) => (
          <button key={d} aria-label={["Minimise", "Restore", "Close"][i]} className="flex w-[58px] justify-center">
            <svg viewBox="0 0 12 12" className="size-[14px]" fill="none"><path d={d} stroke="#888" /></svg>
          </button>
        ))}
        <span className="w-1" />
      </header>
      <nav className="flex h-[23px] items-center gap-[18px] bg-white pl-[9px] text-sm text-[#6d6d6d]">
        {["File", "Edit", "View", "Place", "Route", "Inspect", "Tools", "Preferences", "Help"].map((m) => (
          <button key={m}>{m}</button>
        ))}
      </nav>

      <div className="flex h-12 items-center pl-[5px]">
        {topTools.map((t, i) =>
          t === "|" ? (
            <div key={i} className={sep + " h-8"} />
          ) : (
            <button key={t} aria-label={t} className="relative flex h-10 w-[41px] shrink-0 items-center justify-center">
              <Icon>{icons[t]}</Icon>
              {t === "update" && (
                <>
                  <span className="absolute -top-2 -left-[14px] z-10 h-[54px] w-[66px] border-6 border-[#ff00ff]" />
                  <Step n={1} className="top-[41px] -left-[58px]" />
                </>
              )}
            </button>
          ),
        )}
      </div>
      <div className="flex h-[43px] items-center border-b border-[#a8adb3] pl-[6px]">
        <Combo label="Track width" value="Track: use netclass width" className="h-7 w-48" />
        <button aria-label="Use existing track width" className="ml-1 flex h-[38px] w-[38px] items-center justify-center border border-[#0078d4] bg-[#b3d6f5]">
          <Icon>
            <path d="M2.500 0v14c0 4 2 6.500 5 6.500h9c3 0 5-2.500 5-6.500V0" stroke={D} strokeWidth="1.800" />
            <path d="M8 9h8M8 12.500h8" stroke={D} strokeWidth="1.200" />
            <circle cx="12" cy="20.500" r="2.500" fill={B} />
          </Icon>
        </button>
        <div className={sep + " h-8"} />
        <Combo label="Via size" value="Via: use netclass sizes" className="ml-[3px] h-7 w-[186px]" />
        <div className={sep + " h-8"} />
        <Combo label="Active layer" value="F.Cu (PgUp)" className="ml-[3px] h-[26px] w-[158px]" swatch />
        <button aria-label="Layer pair" className="ml-2 flex">
          <svg viewBox="0 0 30 30" className="size-[30px]">
            <path d="M0 0h22L8 30H0z" fill="#c83434" />
            <path d="M30 0v30H11L25 0z" fill="#4d7fc4" />
            <path d="M23.500 0l-14 30" stroke="#222" strokeDasharray="2 1" />
          </svg>
        </button>
        <div className={sep + " ml-2 h-8"} />
        <Combo label="Grid" value="0.5000 mm (19.69 mils)" className="ml-[3px] h-7 w-[209px]" />
        <div className={sep + " h-8"} />
        <Combo label="Zoom" value="Zoom 1.00" className="ml-[3px] h-7 w-[118px]" />
      </div>

      <div className="flex flex-1">
        <SideTools items={leftTools} />
        <main className="relative min-w-0 flex-1 overflow-hidden bg-[#001023]">
          <BoardView />
          <UpdateDialog />
        </main>
        <SideTools items={rightTools} />
        <div className="w-[5px] shrink-0 bg-[#dcdcdc]" />
        <Appearance />
      </div>

      <footer className="border-t border-[#d0d0d0] text-[#777]">
        <div className="pl-[14px] text-sm leading-5">
          <p>Selected Items</p>
          <p>9</p>
        </div>
        <div className="grid h-[7px] grid-cols-[584fr_97fr_203fr_321fr_234fr_78fr_214fr_189fr] divide-x divide-[#d0d0d0] border-t border-[#d0d0d0]">
          {[0, 1, 2, 3, 4, 5, 6, 7].map((n) => <span key={n} />)}
        </div>
      </footer>
    </div>
  );
}
